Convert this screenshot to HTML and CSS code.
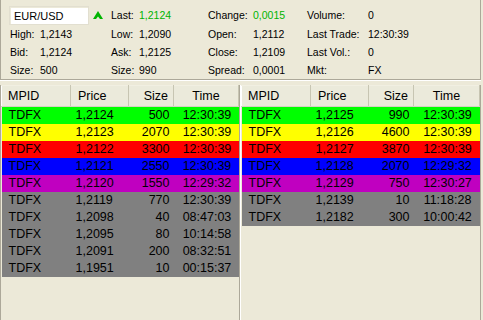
FILE: index.html
```html
<!DOCTYPE html>
<html lang="en">
<head>
    <meta charset="UTF-8">
    <title>Level II - EUR/USD</title>
    <link rel="stylesheet" href="styles.css">
</head>
<body>
    <div class="quote-panel">
        <div class="symbol-cell">
            <div class="symbol-box">EUR/USD</div>
            <svg class="tick-arrow" width="10" height="8" viewBox="0 0 10 8">
                <polygon points="5,0 10,8 7,8 5,5.5 3,8 0,8" fill="#00B400"/>
            </svg>
        </div>
        <span>Last:</span><span class="up">1,2124</span>
        <span>Change:</span><span class="up">0,0015</span>
        <span>Volume:</span><span>0</span>

        <span>High:</span><span>1,2143</span>
        <span>Low:</span><span>1,2090</span>
        <span>Open:</span><span>1,2112</span>
        <span>Last Trade:</span><span>12:30:39</span>

        <span>Bid:</span><span>1,2124</span>
        <span>Ask:</span><span>1,2125</span>
        <span>Close:</span><span>1,2109</span>
        <span>Last Vol.:</span><span>0</span>

        <span>Size:</span><span>500</span>
        <span>Size:</span><span>990</span>
        <span>Spread:</span><span>0,0001</span>
        <span>Mkt:</span><span>FX</span>
    </div>

    <div class="books">
        <div class="book book-bid">
            <table>
                <colgroup><col class="c-mpid"><col class="c-price"><col class="c-size"><col class="c-time"></colgroup>
                <thead>
                    <tr><th class="t-mpid">MPID</th><th class="t-price">Price</th><th class="t-size">Size</th><th class="t-time">Time</th></tr>
                </thead>
                <tbody>
                    <tr class="lvl-green"><td>TDFX</td><td>1,2124</td><td>500</td><td>12:30:39</td></tr>
                    <tr class="lvl-yellow"><td>TDFX</td><td>1,2123</td><td>2070</td><td>12:30:39</td></tr>
                    <tr class="lvl-red"><td>TDFX</td><td>1,2122</td><td>3300</td><td>12:30:39</td></tr>
                    <tr class="lvl-blue"><td>TDFX</td><td>1,2121</td><td>2550</td><td>12:30:39</td></tr>
                    <tr class="lvl-purple"><td>TDFX</td><td>1,2120</td><td>1550</td><td>12:29:32</td></tr>
                    <tr class="lvl-grey"><td>TDFX</td><td>1,2119</td><td>770</td><td>12:30:39</td></tr>
                    <tr class="lvl-grey"><td>TDFX</td><td>1,2098</td><td>40</td><td>08:47:03</td></tr>
                    <tr class="lvl-grey"><td>TDFX</td><td>1,2095</td><td>80</td><td>10:14:58</td></tr>
                    <tr class="lvl-grey"><td>TDFX</td><td>1,2091</td><td>200</td><td>08:32:51</td></tr>
                    <tr class="lvl-grey"><td>TDFX</td><td>1,1951</td><td>10</td><td>00:15:37</td></tr>
                </tbody>
            </table>
        </div>
        <div class="book book-ask">
            <table>
                <colgroup><col class="c-mpid"><col class="c-price"><col class="c-size"><col class="c-time"></colgroup>
                <thead>
                    <tr><th class="t-mpid">MPID</th><th class="t-price">Price</th><th class="t-size">Size</th><th class="t-time">Time</th></tr>
                </thead>
                <tbody>
                    <tr class="lvl-green"><td>TDFX</td><td>1,2125</td><td>990</td><td>12:30:39</td></tr>
                    <tr class="lvl-yellow"><td>TDFX</td><td>1,2126</td><td>4600</td><td>12:30:39</td></tr>
                    <tr class="lvl-red"><td>TDFX</td><td>1,2127</td><td>3870</td><td>12:30:39</td></tr>
                    <tr class="lvl-blue"><td>TDFX</td><td>1,2128</td><td>2070</td><td>12:29:32</td></tr>
                    <tr class="lvl-purple"><td>TDFX</td><td>1,2129</td><td>750</td><td>12:30:27</td></tr>
                    <tr class="lvl-grey"><td>TDFX</td><td>1,2139</td><td>10</td><td>11:18:28</td></tr>
                    <tr class="lvl-grey"><td>TDFX</td><td>1,2182</td><td>300</td><td>10:00:42</td></tr>
                </tbody>
            </table>
        </div>
    </div>
</body>
</html>
```

FILE: styles.css
```css
body {
    margin: 0;
    width: 483px;
    height: 320px;
    overflow: hidden;
    background-color: #ECE9D8;
    font-family: "Liberation Sans", Arial, sans-serif;
    color: #000;
}

/* top quote summary */
.quote-panel {
    box-sizing: border-box;
    width: 481px;
    height: 80px;
    padding: 5px 0 0 9px;
    border-left: 1px solid #ACA899;
    border-right: 1px solid #ACA899;
    border-bottom: 1px solid #ACA899;
    box-shadow: 0 1px 0 #fff;
    display: grid;
    grid-template-columns: 30px 71px 28px 69px 45px 54px 61px 1fr;
    grid-template-rows: 20px 18px 18px 18px;
    align-items: center;
    font-size: 10.5px;
}

.symbol-cell {
    grid-column: span 2;
    display: flex;
    align-items: center;
    gap: 4px;
}

.symbol-box {
    box-sizing: border-box;
    width: 80px;
    height: 19px;
    margin-left: -1px;
    padding: 2px 4px;
    background-color: #fff;
    border: 1px solid #E2DFD0;
    box-shadow: inset 1px 1px 0 #ECE9D8;
    font-size: 11px;
    line-height: 14px;
}

.tick-arrow {
    display: block;
    margin-top: -1px;
}

.up {
    color: #00B400;
}

/* level II books */
.books {
    display: flex;
    margin-top: 5px;
}

.book {
    box-sizing: border-box;
    width: 240px;
    height: 235px;
    border-left: 1px solid #ACA899;
}

.book-bid {
    border-right: 1px solid #ACA899;
}

.book-ask {
    width: 241px;
    border-left: 1px solid #fff;
    border-right: 1px solid #ACA899;
}

table {
    width: 100%;
    border-collapse: collapse;
    table-layout: fixed;
    font-size: 12.5px;
}

.c-mpid { width: 69px; }
.c-price { width: 58px; }
.c-size { width: 45px; }

th {
    height: 20px;
    padding: 0;
    font-weight: normal;
    background-color: #EBEADB;
    border-top: 1px solid #F1EFE2;
    border-bottom: 1px solid #D6D2C2;
    border-left: 1px solid #fff;
    border-right: 1px solid #C7C5B2;
    white-space: nowrap;
}

.t-mpid { text-align: left; padding-left: 6px; }
.t-price { text-align: left; padding-left: 7px; }
.t-size { text-align: right; padding-right: 5px; }
.t-time { text-align: center; }

td {
    height: 17px;
    padding: 0;
    line-height: 17px;
    white-space: nowrap;
}

td:nth-child(1) { padding-left: 7px; }
td:nth-child(2) { padding-left: 5px; }
td:nth-child(3) { text-align: right; padding-right: 4px; }
td:nth-child(4) { text-align: center; padding-left: 2px; }

.lvl-green { background-color: #00FF00; }
.lvl-yellow { background-color: #FFFF00; }
.lvl-red { background-color: #FF0000; }
.lvl-blue { background-color: #0000FF; }
.lvl-purple { background-color: #C000C0; }
.lvl-grey { background-color: #808080; }
```
